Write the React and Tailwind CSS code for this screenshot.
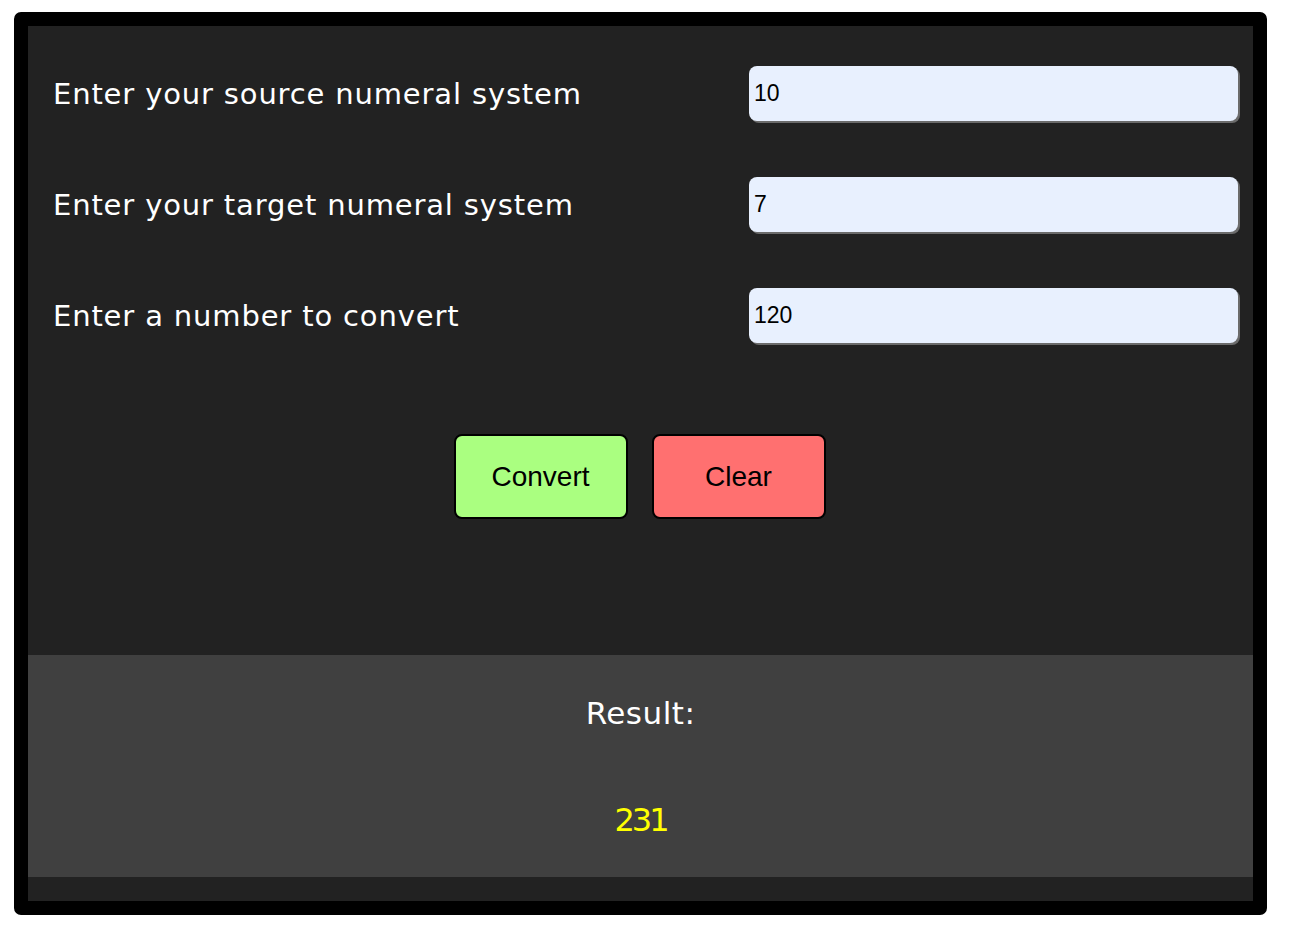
export default function App() {
  const rows = [
    ["Enter your source numeral system", "10"],
    ["Enter your target numeral system", "7"],
    ["Enter a number to convert", "120"],
  ];
  return (
    <div className="w-[1289px] h-[929px] bg-white pt-[12px] pl-[14px]">
      <div className="w-[1253px] h-[903px] border-[14px] border-black rounded-[7px] bg-[#222222] flex flex-col">
        <div className="h-[629px] flex flex-col pt-[40px]">
          {rows.map(([label, val], i) => (
            <div key={i} className="flex items-center justify-between pl-[25px] pr-[15px] h-[55px] mb-[56px]">
              <span
                className="text-white text-[29px] tracking-[0.85px] pt-[3px]"
                style={{ fontFamily: '"DejaVu Sans", sans-serif' }}
              >
                {label}
              </span>
              <div
                className="w-[489px] h-[55px] bg-[#e8f0fe] rounded-[8px] shadow-[2px_2px_0_#6b6b6b] flex items-center pl-[5px] text-black text-[23px]"
                style={{ fontFamily: '"Liberation Sans", Arial, sans-serif' }}
              >
                {val}
              </div>
            </div>
          ))}
          <div className="flex justify-center gap-[24px] mt-[35px] pr-[2px]">
            <button
              className="w-[174px] h-[85px] bg-[#aaff80] border-2 border-black rounded-[8px] text-black text-[28px]"
              style={{ fontFamily: '"Liberation Sans", Arial, sans-serif' }}
            >
              Convert
            </button>
            <button
              className="w-[174px] h-[85px] bg-[#ff7070] border-2 border-black rounded-[8px] text-black text-[28px]"
              style={{ fontFamily: '"Liberation Sans", Arial, sans-serif' }}
            >
              Clear
            </button>
          </div>
        </div>
        <div
          className="h-[222px] bg-[#404040] flex flex-col items-center"
          style={{ fontFamily: '"DejaVu Sans", sans-serif' }}
        >
          <div className="text-white text-[31px] tracking-[0.5px] mt-[38px] leading-[40px]">Result:</div>
          <div className="text-[#ffff00] text-[32px] tracking-[-3px] mt-[67px] leading-[40px]">231</div>
        </div>
        <div className="h-[24px]" />
      </div>
    </div>
  );
}
